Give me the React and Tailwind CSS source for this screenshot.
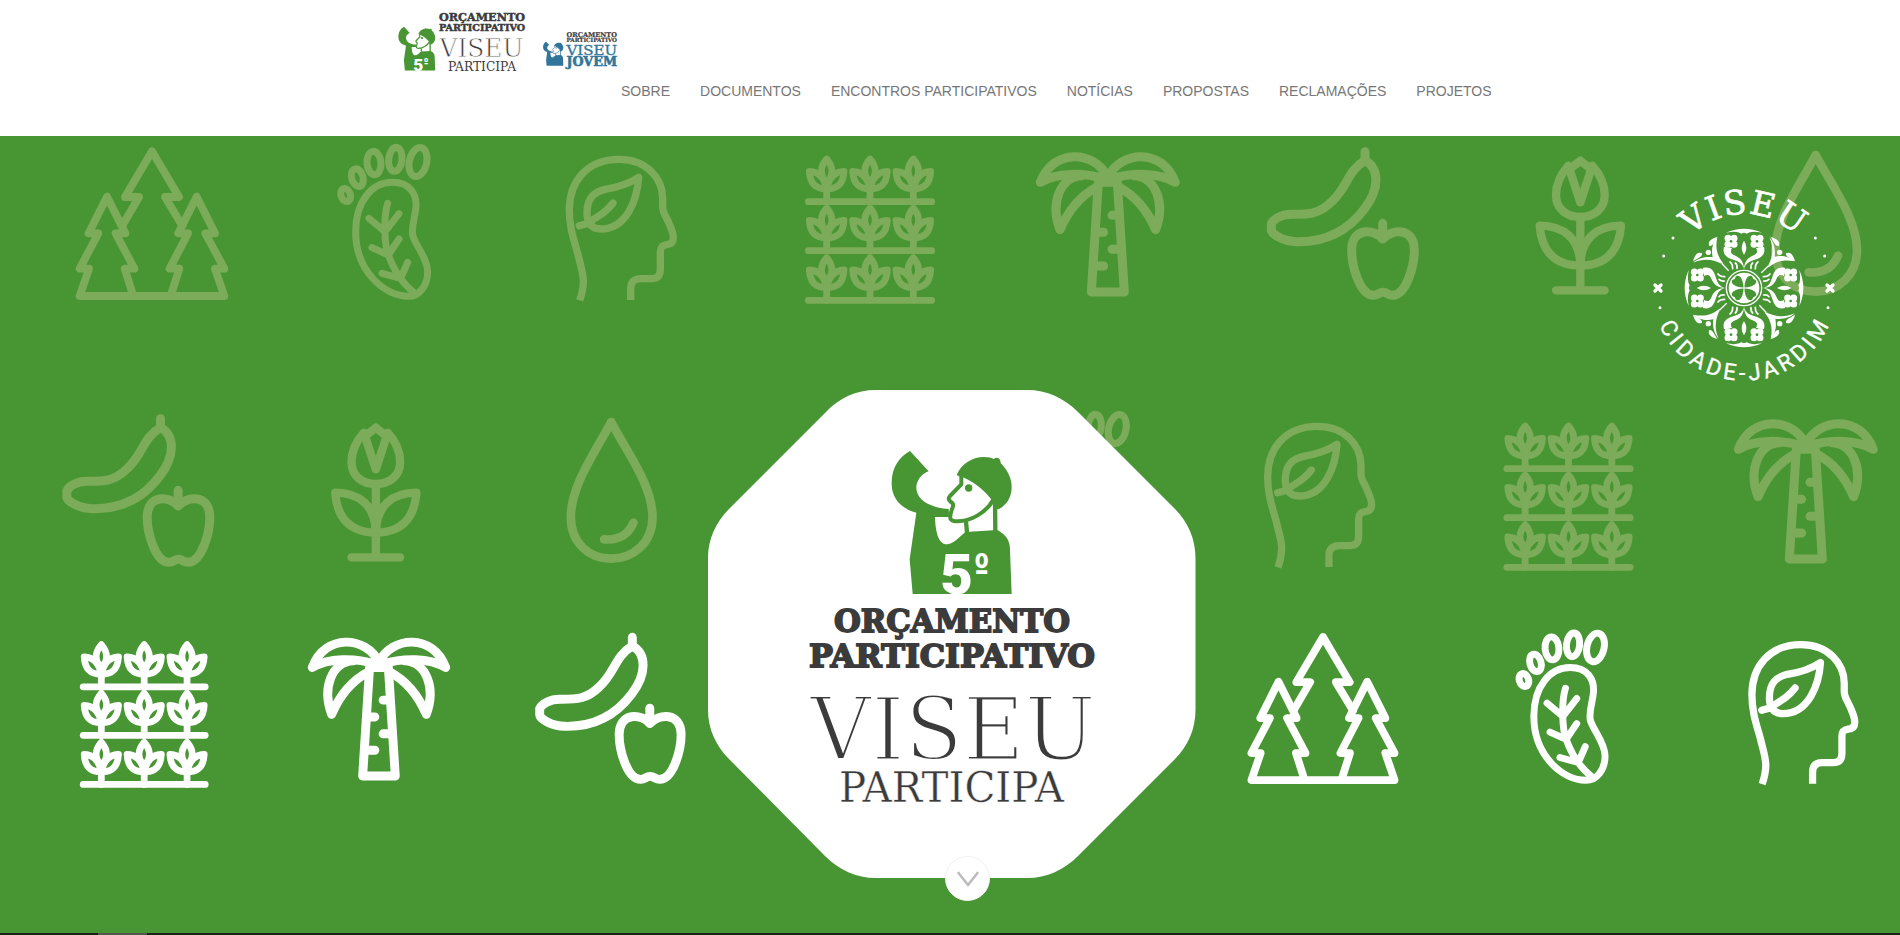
import React from 'react';

const NAV = ['SOBRE', 'DOCUMENTOS', 'ENCONTROS PARTICIPATIVOS', 'NOTÍCIAS', 'PROPOSTAS', 'RECLAMAÇÕES', 'PROJETOS'];

const SLAB = '"DejaVu Serif", serif';

/* ---------- line icons of the banner pattern ---------- */

const Trees = () => (
  <g strokeWidth="23.500">
    <path d="M218 270 L267 186 H225 L306 49 L387 186 H345 L397 272" />
    <path d="M250 483 L224 401 H253 L197 295 H226 L171 185 L116 295 H145 L89 401 H117 L89 483 H523 L495 401 H523 L466 295 H495 L440 185 L385 295 H414 L359 401 H388 L362 483" />
  </g>
);

const Foot = () => (
  <g strokeWidth="21">
    <ellipse cx="887" cy="180" rx="14" ry="20" transform="rotate(-18 887 180)" />
    <ellipse cx="922" cy="128" rx="17" ry="27" transform="rotate(-16 922 128)" />
    <ellipse cx="972" cy="84" rx="21" ry="35" transform="rotate(-5 972 84)" />
    <ellipse cx="1036" cy="73" rx="20" ry="36" transform="rotate(6 1036 73)" />
    <ellipse cx="1104" cy="81" rx="26" ry="44" transform="rotate(13 1104 81)" />
    <path d="M1027 142 C1082 142 1100 180 1098 215 C1096 245 1084 270 1088 300 C1095 330 1133 370 1133 410 C1133 452 1108 484 1075 484 C1005 484 917 410 917 290 C917 200 965 142 1027 142Z" />
    <path d="M1013 205 C1000 245 1003 330 1015 360 C1030 400 1050 440 1098 478 M957 250 L1005 290 L1047 236 M966 338 L1015 360 L1047 312 M996 415 L1052 430 L1073 382" />
  </g>
);

const Head = () => (
  <g strokeWidth="22" strokeLinecap="butt">
    <path d="M119 496 C140 435 127 415 113 355 C100 310 88 275 88 225 C88 140 140 73 237 73 C320 73 368 130 368 190 V215 C368 235 380 245 390 272 C396 286 400 296 400 308 C400 322 392 328 380 329 C366 331 361 337 361 350 V402 C361 422 352 431 333 431 H302 C282 431 272 441 272 460 V495" />
    <path strokeLinecap="round" d="M296 127 C292 190 262 282 182 282 C152 282 141 262 141 235 C141 190 160 172 195 163 C230 158 262 150 296 127Z M118 272 L140 266 C180 240 200 230 219 204" />
  </g>
);

const SHELVES = [200, 347, 496];
const STEMS = [860, 990, 1120];

const Wheat = () => (
  <g strokeWidth="20.500">
    {SHELVES.map((y) => (
      <g key={y}>
        <path d={`M805 ${y}H1175`} />
        {STEMS.map((x) => (
          <g key={x} transform={`translate(${x} ${y})`}>
            <path d="M0 -128 C-20 -105 -22 -80 0 -58 C22 -80 20 -105 0 -128Z" />
            <path d="M-52 -91 C-50 -55 -34 -38 0 -38 C-6 -68 -22 -90 -52 -91Z" />
            <path d="M52 -91 C50 -55 34 -38 0 -38 C6 -68 22 -90 52 -91Z" />
            <path d="M0 -45V0" />
          </g>
        ))}
      </g>
    ))}
  </g>
);

const Palm = () => (
  <g strokeWidth="27">
    {[false, true].map((flip) => (
      <g key={String(flip)} transform={flip ? 'translate(587 0) scale(-1 1)' : undefined}>
        <path d="M293 126 C255 47 130 37 91 142 C140 112 220 112 285 132" />
        <path d="M215 122 C150 125 120 205 150 284 C175 225 215 180 262 155" />
      </g>
    ))}
    <path d="M265 142 L244 471 H343 L322 142 Z" />
    <path d="M306 241H320 M264 292H281 M306 343H322 M262 393H281" />
  </g>
);

const Fruit = () => (
  <g strokeWidth="27">
    <path d="M1065 76 C1108 100 1110 160 1063 222 C1012 290 945 322 860 320 C820 320 784 297 784 285 V266 C790 252 815 238 845 238 C890 238 925 240 965 200 C1012 158 1012 108 1065 76Z" />
    <path d="M1065 50V78" />
    <path d="M1118 312 C1095 282 1025 275 1025 345 C1025 390 1048 480 1090 481 C1104 481 1106 472 1119 472 C1132 472 1134 481 1148 481 C1190 480 1213 390 1213 345 C1213 275 1143 282 1118 312Z M1118 265V305" />
  </g>
);

const Flower = () => (
  <g strokeWidth="25">
    <path d="M205 92 C178 122 168 150 168 180 C168 222 200 246 241 246 C282 246 314 222 314 180 C314 150 304 122 277 92 L241 202 L205 92 M216 97 L241 77 L266 97" />
    <path d="M241 246V466 M168 466H314" />
    <path d="M241 392 C240 310 190 272 119 272 C125 350 165 392 241 392Z M241 392 C242 310 292 272 363 272 C357 350 317 392 241 392Z" />
  </g>
);

const Drop = () => (
  <g strokeWidth="26">
    <path d="M947 60 C900 150 826 250 826 345 C826 422 880 470 947 470 C1014 470 1071 422 1071 345 C1071 250 994 150 947 60Z" />
    <path d="M926 412 C975 416 1000 395 1014 362" />
  </g>
);

const FAINT = [
  [Trees, 50, 135], [Foot, 50, 135], [Head, 540, 135], [Wheat, 540, 135],
  [Palm, 1010, 135], [Fruit, 1010, 135], [Flower, 1500, 135], [Drop, 1500, 135],
  [Fruit, -194.5, 402], [Flower, 295.500, 402], [Drop, 295.500, 402], [Foot, 749.3, 402],
  [Head, 1238.3, 402], [Wheat, 1238.5, 402], [Palm, 1708, 402],
];

const SOLID = [
  [Wheat, -182.2, 620.9], [Palm, 282.2, 620.7], [Fruit, 281.2, 620.8],
  [Trees, 1222.1, 620.8], [Foot, 1231.5, 620.7], [Head, 1722.9, 620.6],
];

function Pattern() {
  return (
    <svg className="absolute inset-0 h-full w-full" viewBox="0 136 1900 797" fill="none" strokeLinecap="round" strokeLinejoin="round">
      <g stroke="#7cab5a">
        {FAINT.map(([Icon, x, y], i) => (
          <g key={i} transform={`translate(${x} ${y}) scale(0.33333)`}><Icon /></g>
        ))}
      </g>
      <g stroke="#ffffff">
        {SOLID.map(([Icon, x, y], i) => (
          <g key={i} transform={`translate(${x} ${y}) scale(0.3297)`}><Icon /></g>
        ))}
      </g>
    </svg>
  );
}

/* ---------- city seal ---------- */

const Blossom = ({ x, y }) => (
  <g transform={`translate(${x} ${y})`}>
    {[[-9, -9], [9, -9], [-9, 9], [9, 9]].map(([a, b]) => (
      <circle key={`${a}${b}`} cx={a} cy={b} r="10.500" />
    ))}
    <circle r="4" fill="#489633" />
  </g>
);

const HalfPetal = () => (
  <g>
    <Blossom x={-39} y={-140} />
    <path d="M-60 -124 C-66 -98 -50 -90 -30 -84 C-12 -78 -4 -72 0 -56 C-1 -80 -10 -90 -26 -97 C-40 -103 -42 -108 -36 -120 Z" />
    <path d="M-42 -78 C-36 -74 -34 -66 -34 -58 M-26 -75 C-22 -72 -20 -66 -21 -59" stroke="#fff" strokeWidth="5" fill="none" strokeLinecap="round" />
  </g>
);

function Seal() {
  return (
    <svg className="absolute top-[46px] right-[52px] h-[212px] w-[208px] overflow-visible" viewBox="-312 -318 624 636" fill="#fff">
      <defs>
        <path id="arc-top" d="M-222 0 A222 222 0 0 1 222 0" />
        <path id="arc-bottom" d="M-278 0 A278 278 0 0 0 278 0" />
      </defs>
      <text fontFamily={SLAB} fontSize="100" letterSpacing="3" stroke="#fff" strokeWidth="2">
        <textPath href="#arc-top" startOffset="50%" textAnchor="middle">VISEU</textPath>
      </text>
      <text fontFamily="Roboto, sans-serif" fontSize="68" letterSpacing="12" stroke="#fff" strokeWidth="1">
        <textPath href="#arc-bottom" startOffset="50.7%" textAnchor="middle">CIDADE-JARDIM</textPath>
      </text>
      {[0, 90, 180, 270].map((a) => (
        <g key={a} transform={`rotate(${a})`}>
          <path d="M-54 -166 Q0 -190 54 -166 Q20 -172 8 -163 Q0 -168 -8 -163 Q-20 -172 -54 -166Z" />
          <path d="M0 -142 Q14 -121 0 -99 Q-14 -121 0 -142Z" />
          <HalfPetal />
          <g transform="scale(-1 1)"><HalfPetal /></g>
          <path d="M-80 -152 C-88 -118 -78 -92 -62 -74 L-64 -71 C-88 -84 -118 -92 -152 -76 C-135 -92 -112 -94 -94 -92 C-98 -112 -96 -136 -80 -152Z" />
          <path d="M-66 -73 L-46 -52" stroke="#fff" strokeWidth="4" />
          <circle cx="-107" cy="-107" r="8" />
          <path d="M-80 -153 C-100 -148 -110 -138 -104 -126 C-94 -124 -90 -138 -80 -153Z M-153 -80 C-148 -100 -138 -110 -126 -104 C-124 -94 -138 -90 -153 -80Z" />
        </g>
      ))}
      <circle r="53" fill="none" stroke="#fff" strokeWidth="4" />
      <circle r="46" />
      {[45, 135, 225, 315].map((a) => (
        <path key={a} transform={`rotate(${a})`} fill="#489633" d="M0 -2 C-17 -20 -20 -38 -8 -42 Q0 -37 8 -42 C20 -38 17 -20 0 -2Z" />
      ))}
      {[-258, 258].map((x) => (
        <path key={x} transform={`translate(${x} 0)`} d="M-9 -9L9 9M-9 9L9 -9" stroke="#fff" strokeWidth="10" strokeLinecap="round" />
      ))}
      {[[-213, -150], [214, -150], [-241, -96], [242, -96], [-252, 59], [252, 59]].map(([x, y]) => (
        <circle key={`${x}${y}`} cx={x} cy={y} r="4.500" />
      ))}
    </svg>
  );
}

/* ---------- mascot and word marks ---------- */

const Person = ({ color, number }) => (
  <g fill={color}>
    <path d="M150 60 L206 121 C185 128 168 150 169 172 C172 215 225 232 266 234 L268 258 H225 C226 300 235 340 260 340 C280 340 298 318 316 303 L412 297 C440 312 450 330 450 357 L455 489 H158 L149 385 L169 245 C120 232 94 200 95 155 C95 110 120 75 150 60Z" />
    <path d="M290 132 C305 95 340 78 372 78 C385 78 395 80 402 84 C408 77 422 80 422 96 C445 120 456 145 455 170 C454 200 440 222 415 235 H402 L395 206 C375 180 345 155 312 140 L300 137Z" />
    <g fill="none" stroke={color} strokeWidth="12" strokeLinejoin="round">
      <path d="M304 134 V160 L270 195 C262 204 268 210 277 216 C284 224 276 230 274 240 C268 262 268 270 290 271 C330 272 378 246 400 206" />
      <path d="M318 272 L321 305 M405 204 L406 300" strokeWidth="13" />
    </g>
    <circle cx="326" cy="171" r="11" />
    {number && (
      <g fill="#fff" fontWeight="900">
        <text x="241" y="490" fontSize="166" textLength="98" lengthAdjust="spacingAndGlyphs" fontFamily="Roboto, sans-serif">5</text>
        <text x="342" y="449" fontSize="112" textLength="46" lengthAdjust="spacingAndGlyphs" fontFamily='"DejaVu Sans", sans-serif'>º</text>
      </g>
    )}
  </g>
);

const Word = ({ x, y, w, size, fill = '#3c3b3c', bold, edge, edgeWidth = 0, children }) => (
  <text
    x={x} y={y} fontSize={size} textLength={w} lengthAdjust="spacingAndGlyphs"
    fontFamily={SLAB} fontWeight={bold ? 700 : 400} fill={fill}
    stroke={edge} strokeWidth={edgeWidth}
  >
    {children}
  </text>
);

const LogoParticipa = () => (
  <svg className="h-[66px] w-[130px] overflow-visible" viewBox="397 8 130 66">
    <g transform="translate(388.7 20.6) scale(0.1022)"><Person color="#489633" number /></g>
    <Word x="439" y="20.6" w="86" size="11.500" bold edge="#3c3b3c" edgeWidth="0.5">ORÇAMENTO</Word>
    <Word x="439" y="31" w="86" size="9.800" bold edge="#3c3b3c" edgeWidth="0.5">PARTICIPATIVO</Word>
    <Word x="439.500" y="56.700" w="84" size="26" edge="#fff" edgeWidth="0.8">VISEU</Word>
    <Word x="448" y="71" w="68" size="12">PARTICIPA</Word>
  </svg>
);

const LogoJovem = () => (
  <svg className="h-[66px] w-[78px] overflow-visible" viewBox="541 8 78 66">
    <g transform="translate(537.7 38.3) scale(0.0563)"><Person color="#31769a" /></g>
    <Word x="566.500" y="36.500" w="50.500" size="6.600" bold edge="#3c3b3c" edgeWidth="0.2">ORÇAMENTO</Word>
    <Word x="566.500" y="42.100" w="50.500" size="5.800" bold edge="#3c3b3c" edgeWidth="0.2">PARTICIPATIVO</Word>
    <Word x="566.500" y="54.600" w="50.500" size="12" fill="#31769a" edge="#31769a" edgeWidth="0.3">VISEU</Word>
    <Word x="566.500" y="65.600" w="50.500" size="12.400" fill="#31769a" bold edge="#31769a" edgeWidth="0.6">JOVEM</Word>
  </svg>
);

const Badge = () => (
  <svg className="absolute top-[253.500px] left-[708px] h-[488px] w-[488px]" viewBox="708 389 488 488">
    <path fill="#fff" d="M876 389 H1027 C1047 389 1064 397 1078 411 L1175 508 C1188 521 1195.500 538 1195.500 557 V709 C1195.500 728 1188 745 1175 758 L1078 855 C1064 869 1047 877 1027 877 H876 C856 877 839 869 825 855 L729 758 C716 745 708 728 708 709 V557 C708 538 716 521 729 508 L826 411 C839 397 856 389 876 389Z" />
    <g transform="translate(860 430) scale(0.33333)"><Person color="#489633" number /></g>
    <Word x="834" y="631.300" w="236" size="32.500" bold edge="#3c3b3c" edgeWidth="1.800">ORÇAMENTO</Word>
    <Word x="809" y="666.400" w="286" size="32.500" bold edge="#3c3b3c" edgeWidth="1.800">PARTICIPATIVO</Word>
    <Word x="810" y="758.500" w="286" size="88" edge="#fff" edgeWidth="3">VISEU</Word>
    <Word x="839" y="801" w="225" size="42.500" edge="#fff" edgeWidth="0.400">PARTICIPA</Word>
  </svg>
);

export default function App() {
  return (
    <div className="flex h-[935px] w-full flex-col overflow-hidden bg-white font-['Liberation_Sans',Arial,sans-serif]">
      <header className="h-[136px] shrink-0 bg-white pt-2 pl-[397px]">
        <div className="flex gap-[14px]">
          <LogoParticipa />
          <LogoJovem />
        </div>
        <nav className="mt-[7px] ml-[224px] flex gap-[30px] text-sm leading-5 whitespace-nowrap text-[#777]">
          {NAV.map((label) => <a key={label} href="#">{label}</a>)}
        </nav>
      </header>
      <main className="relative h-[797px] shrink-0 bg-[#489633]">
        <Pattern />
        <Seal />
        <Badge />
        <button aria-label="Descer" className="absolute top-[720px] left-[945px] flex size-[45px] items-center justify-center rounded-full border border-[#f3f1f3] bg-white">
          <svg className="h-[18px] w-[24px]" viewBox="0 0 24 18" fill="none" stroke="#bdbbbd" strokeWidth="2.600" strokeLinecap="round" strokeLinejoin="round">
            <path d="M2.500 3 L12 15 L21.500 3" />
          </svg>
        </button>
      </main>
      <footer className="h-[2px] bg-[#1c1f1b] pl-[98px]">
        <div className="h-full w-[49px] bg-[#555]" />
      </footer>
    </div>
  );
}
